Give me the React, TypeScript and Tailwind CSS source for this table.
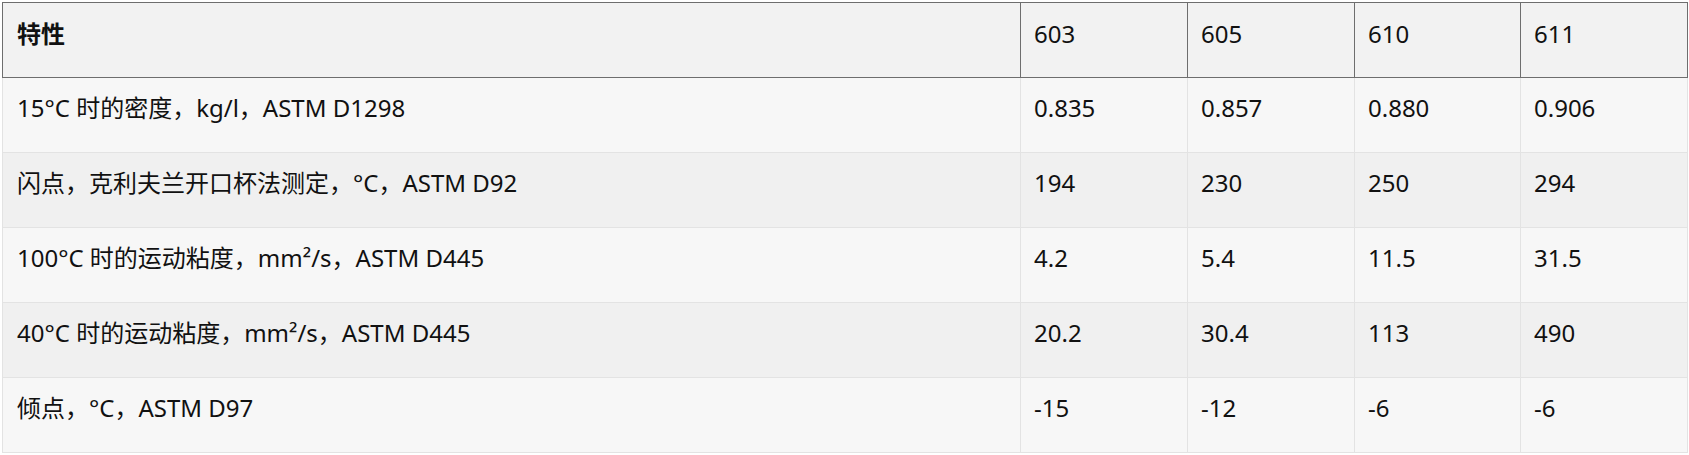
import React from "react";

const headers = ["特性", "603", "605", "610", "611"];
const rows: string[][] = [
  ["15°C 时的密度，kg/l，ASTM D1298", "0.835", "0.857", "0.880", "0.906"],
  ["闪点，克利夫兰开口杯法测定，°C，ASTM D92", "194", "230", "250", "294"],
  ["100°C 时的运动粘度，mm²/s，ASTM D445", "4.2", "5.4", "11.5", "31.5"],
  ["40°C 时的运动粘度，mm²/s，ASTM D445", "20.2", "30.4", "113", "490"],
  ["倾点，°C，ASTM D97", "-15", "-12", "-6", "-6"],
];

export default function App() {
  return (
    <div
      className="w-[1689px] h-[455px] bg-white pt-[2px] pl-[2px] pr-[2px] text-[#111111]"
      style={{ fontFamily: '"Noto Sans", "Noto Sans CJK SC", sans-serif' }}
    >
      <table className="w-[1685px] border-collapse table-fixed">
        <colgroup>
          <col className="w-[1018px]" />
          <col className="w-[167px]" />
          <col className="w-[167px]" />
          <col className="w-[166px]" />
          <col className="w-[167px]" />
        </colgroup>
        <thead>
          <tr className="h-[75px] bg-[#f2f2f2]">
            {headers.map((h, i) => (
              <th
                key={i}
                className={`border border-[#6e6e6e] text-left align-top text-[24px] leading-[36px] pt-[13px] ${i === 0 ? "pl-[14px] font-bold" : "pl-[13px] font-normal"}`}
              >
                {h}
              </th>
            ))}
          </tr>
        </thead>
        <tbody>
          {rows.map((r, ri) => (
            <tr key={ri} className={`h-[75px] ${ri % 2 === 0 ? "bg-[#f7f7f7]" : "bg-[#f0f0f0]"}`}>
              {r.map((c, ci) => (
                <td
                  key={ci}
                  className={`border border-[#e3e3e3] text-left align-top text-[24px] leading-[36px] pt-[12px] ${ci === 0 ? "pl-[14px]" : "pl-[13px]"}`}
                >
                  {c}
                </td>
              ))}
            </tr>
          ))}
        </tbody>
      </table>
    </div>
  );
}
